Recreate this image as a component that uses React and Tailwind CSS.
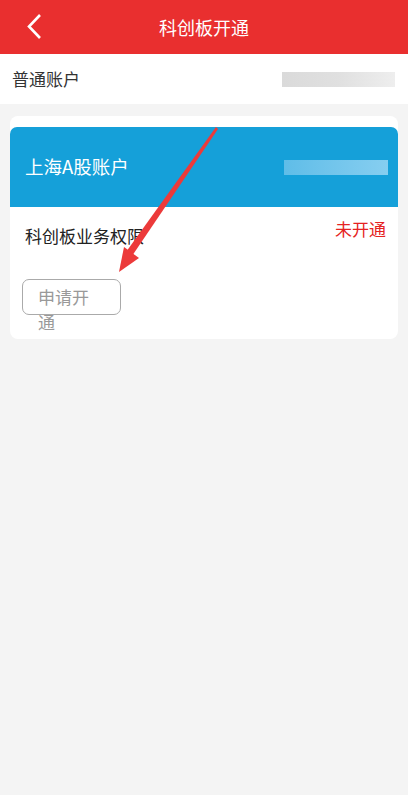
import React from 'react';

const font = { fontFamily: '"Noto Sans CJK SC", "Noto Sans", sans-serif' };

// blurred-out account number
const Masked = ({ className }) => <div className={className} />;

const Arrow = () => (
  <svg className="absolute left-0 top-0 pointer-events-none" width="408" height="400" viewBox="0 0 408 400">
    <polygon points="216,127 218,129 132,256 126,252" fill="#ec3a3a" />
    <polygon points="119,272 124,247 139,258" fill="#ec3a3a" />
  </svg>
);

export default function App() {
  return (
    <div className="relative min-h-[795px] w-[408px] bg-[#f4f4f4]" style={font}>
      <div className="relative flex h-[54px] items-center justify-center bg-[#e92f2f]">
        <svg className="absolute left-[25px] top-[13px]" width="20" height="27" viewBox="0 0 20 27">
          <path d="M15 2 L4 13.5 L15 25" fill="none" stroke="#fff" strokeWidth="2.6" />
        </svg>
        <span className="text-[18px] text-white">科创板开通</span>
      </div>

      <div className="flex h-[50px] items-center justify-between bg-white pl-[12px] pr-[13px]">
        <span className="text-[17px] text-[#333]">普通账户</span>
        <Masked className="h-[15px] w-[113px] bg-gradient-to-r from-[#dadada] via-[#e0e0e0] to-[#eeeeee]" />
      </div>

      <div className="px-[10px] pt-[12px]">
        <div className="rounded-[8px] bg-white pt-[11px] pb-[24px]">
          <div className="flex h-[80px] items-center justify-between rounded-t-[7px] bg-[#15a0d9] pl-[15px] pr-[10px]">
            <span className="text-[18.5px] text-white">上海A股账户</span>
            <Masked className="h-[15px] w-[104px] bg-gradient-to-r from-[#5fbde8] to-[#86cef0]" />
          </div>
          <div className="flex items-start justify-between pl-[15px] pr-[12px] pt-[9px]">
            <span className="mt-[7px] text-[17px] leading-[26px] text-[#222]">科创板业务权限</span>
            <span className="text-[17px] leading-[26px] text-[#e52222]">未开通</span>
          </div>
          <div className="pl-[12px] pt-[30px]">
            <div className="h-[36px] w-[99px] rounded-[7px] border border-[#aaa] pl-[15px] pt-[4px]">
              <div className="w-[58px] text-[17px] leading-[25px] text-[#999]">申请开通</div>
            </div>
          </div>
        </div>
      </div>

      <Arrow />
    </div>
  );
}
